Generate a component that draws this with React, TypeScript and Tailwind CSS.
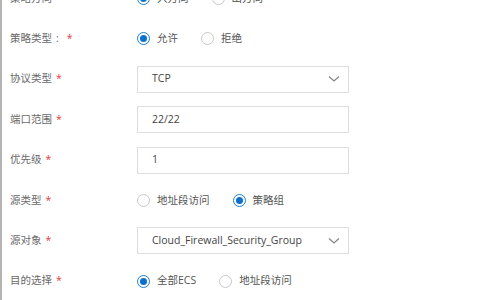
import React from "react";

type Opt = { label: string; checked?: boolean };

function Radio({ label, checked }: Opt) {
  return (
    <label className="flex items-center gap-[7px] mr-[23px] text-[#555]">
      <span
        className={
          checked
            ? "w-[13px] h-[13px] rounded-full border border-[#1a7fd4] flex items-center justify-center bg-white"
            : "w-[13px] h-[13px] rounded-full border border-[#c8c8c8] bg-white"
        }
      >
        {checked && <span className="w-[7px] h-[7px] rounded-full bg-[#0b6fcc]" />}
      </span>
      <span>{label}</span>
    </label>
  );
}

function Row({ label, colon, children }: { label: string; colon?: boolean; children: React.ReactNode }) {
  return (
    <div className="flex items-center h-[40.4px]">
      <div className="w-[127px] shrink-0 text-[#6a6a6a]">
        {label}
        {colon && <span className="ml-[4px]">:</span>}
        <span className={colon ? "text-[#e4393c] ml-[8px]" : "text-[#e4393c] ml-[4px]"}>*</span>
      </div>
      <div className="flex items-center">{children}</div>
    </div>
  );
}

function Box({ value, select }: { value: string; select?: boolean }) {
  return (
    <div className="w-[212px] h-[27px] border border-[#dedede] bg-white flex items-center justify-between pl-[14px] pr-[8px] text-[#444]">
      <span>{value}</span>
      {select && (
        <svg width="12" height="8" viewBox="0 0 12 8" fill="none">
          <path d="M1 1.5 L6 6 L11 1.5" stroke="#888" strokeWidth="1.3" />
        </svg>
      )}
    </div>
  );
}

export default function App() {
  return (
    <div
      className="w-[480px] h-[300px] overflow-hidden bg-white border-l-2 border-[#b4b4b4] text-[10.5px]"
      style={{ fontFamily: '"Open Sans", "Noto Sans CJK SC", sans-serif' }}
    >
      <div className="mt-[-21.7px] pl-[8px]">
        <Row label="策略方向">
          <Radio label="入方向" checked />
          <Radio label="出方向" />
        </Row>
        <Row label="策略类型" colon>
          <Radio label="允许" checked />
          <Radio label="拒绝" />
        </Row>
        <Row label="协议类型">
          <Box value="TCP" select />
        </Row>
        <Row label="端口范围">
          <Box value="22/22" />
        </Row>
        <Row label="优先级">
          <Box value="1" />
        </Row>
        <Row label="源类型">
          <Radio label="地址段访问" />
          <Radio label="策略组" checked />
        </Row>
        <Row label="源对象">
          <Box value="Cloud_Firewall_Security_Group" select />
        </Row>
        <Row label="目的选择">
          <Radio label="全部ECS" checked />
          <Radio label="地址段访问" />
        </Row>
      </div>
    </div>
  );
}
